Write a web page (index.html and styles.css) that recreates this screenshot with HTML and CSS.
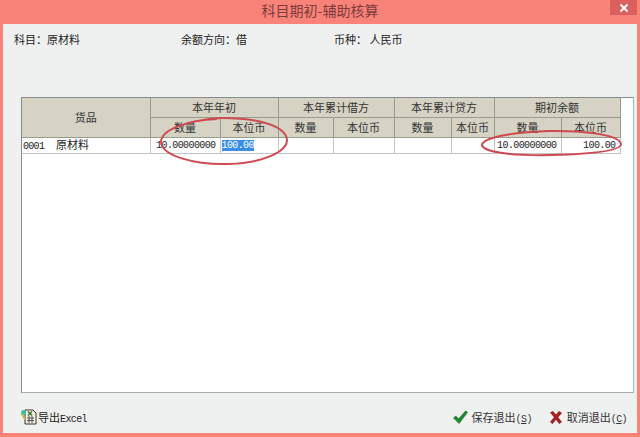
FILE: index.html
```html
<!DOCTYPE html>
<html lang="zh">
<head>
<meta charset="utf-8">
<title>科目期初-辅助核算</title>
<link rel="stylesheet" href="styles.css">
</head>
<body>
<div class="window">
  <header class="titlebar">
    <span class="title">科目期初-辅助核算</span>
    <span class="close">
      <svg width="10" height="10" viewBox="0 0 10 10"><path d="M1.500 1.500l7 7M8.500 1.500l-7 7" stroke="#fff" stroke-width="2" fill="none"/></svg>
    </span>
  </header>
  <main class="panel">
    <div class="info">
      <span class="info-a">科目：原材料</span>
      <span class="info-b">余额方向：借</span>
      <span class="info-c">币种：&nbsp;人民币</span>
    </div>
    <div class="gridbox">
      <table class="grid">
        <colgroup>
          <col class="c1"><col class="c2"><col class="c3"><col class="c4"><col class="c5"><col class="c6"><col class="c7"><col class="c8"><col class="c9">
        </colgroup>
        <thead>
          <tr class="h1">
            <th rowspan="2">货品</th>
            <th colspan="2">本年年初</th>
            <th colspan="2">本年累计借方</th>
            <th colspan="2">本年累计贷方</th>
            <th colspan="2">期初余额</th>
          </tr>
          <tr class="h2">
            <th>数量</th><th>本位币</th><th>数量</th><th>本位币</th><th>数量</th><th>本位币</th><th>数量</th><th>本位币</th>
          </tr>
        </thead>
        <tbody>
          <tr>
            <td class="goods"><span class="code">0001</span>原材料</td>
            <td class="num">10.00000000</td>
            <td class="edit"><span class="sel">100.00</span></td>
            <td></td><td></td><td></td><td></td>
            <td class="num">10.00000000</td>
            <td class="num">100.00</td>
          </tr>
        </tbody>
      </table>
    </div>
    <footer class="footer">
      <span class="btn">
        <svg width="17" height="18" viewBox="0 0 17 18">
          <path d="M5 2h8l3 3v11H5z" fill="#f4f2e4" stroke="#333" stroke-width="1"/>
          <path d="M7 10h7M7 12.500h7M9 8v7M12 8v7" stroke="#555" stroke-width="1"/>
          <path d="M8 3.500l4 4M12 3.500l-4 4" stroke="#3c7a2a" stroke-width="1.600"/>
          <circle cx="3.500" cy="4.500" r="2.500" fill="#3fbf9a"/>
          <path d="M1.500 6l3.500 5" stroke="#c9b84a" stroke-width="2"/>
        </svg>
        <span class="lbl">导出<span class="latin">Excel</span></span>
      </span>
      <span class="right">
        <span class="btn save">
          <svg width="15" height="14" viewBox="0 0 16 15"><path d="M0.500 8.500l2.500-2 3 3L13.500 1l2 1.500-9 12z" fill="#1f8a2e" stroke="#0f5c1c" stroke-width=".6"/></svg>
          <span class="lbl2">保存退出<span class="latin">(<u>S</u>)</span></span>
        </span>
        <span class="btn cancel">
          <svg width="14" height="14" viewBox="0 0 14 14"><path d="M1 2.500l3-1.500 3 3.500 3-3.500 3 2-3.800 4.300 3.800 4.700-2.800 2-3.200-4.300-3.500 4.300-2.500-2 4-4.700z" fill="#a3201f"/></svg>
          <span class="lbl2">取消退出<span class="latin">(<u>C</u>)</span></span>
        </span>
      </span>
    </footer>
  </main>
  <svg class="marks" width="640" height="437" viewBox="0 0 640 437">
    <path d="M217 119C187 120 161 130 161 142C162 156 195 165 229 164C262 163 287 152 287 140C286 127 262 118 222 118C214 118 206 119 198 121" />
    <path d="M550 131C510 132 483 138 482 145C483 152 512 156 552 155C592 154 621 151 621 144C620 136 590 130 545 131" />
  </svg>
</div>
</body>
</html>
```
FILE: styles.css
```css
* { box-sizing: border-box; }
html, body { margin: 0; height: 100%; }
body {
  font-family: "Noto Sans CJK SC", "Liberation Sans", sans-serif;
  font-size: 11px;
  color: #222;
  overflow: hidden;
}
.window {
  position: relative;
  width: 640px;
  height: 437px;
  background: #f98279;
  padding: 0 3px 4px;
  display: flex;
  flex-direction: column;
}
.titlebar {
  height: 24px;
  flex: none;
  position: relative;
  display: flex;
  align-items: center;
  justify-content: center;
  padding-bottom: 4px;
}
.title { font-size: 14px; color: #7c3c3c; }
.close {
  position: absolute;
  top: 0;
  right: 0;
  width: 27px;
  height: 15px;
  background: #d9605c;
  display: flex;
  align-items: center;
  justify-content: center;
}
.panel {
  flex: 1;
  background: #eff0f0;
  display: flex;
  flex-direction: column;
  min-height: 0;
}
.info {
  height: 73px;
  flex: none;
  padding: 7px 0 0 11px;
  display: flex;
  line-height: 16px;
}
.info-a { width: 167px; }
.info-b { width: 153px; }
.gridbox {
  width: 613px;
  height: 296px;
  flex: none;
  margin-left: 18px;
  background: #fff;
  border: 1px solid #8a8a8a;
  border-right-color: #b5b5b5;
  border-bottom-color: #a8a8a8;
}
.grid {
  table-layout: fixed;
  border-collapse: collapse;
  width: 598px;
}
.c1 { width: 128px; } .c2 { width: 70px; } .c3 { width: 58px; }
.c4 { width: 55px; } .c5 { width: 61px; } .c6 { width: 57px; }
.c7 { width: 43px; } .c8 { width: 67px; } .c9 { width: 59px; }
.grid th {
  background: #d6d2c4;
  font-weight: 400;
  padding: 0;
  border: 1px solid #9a9a90;
  border-top: 0;
  text-align: center;
  color: #333;
  line-height: 14px;
}
.grid th:first-child { border-left: 0; }
.h1 th { height: 19px; }
.h2 th { height: 20px; }
.grid td {
  height: 15px;
  padding: 0 1px;
  border: 1px solid #c4c4c4;
  border-top: 0;
  line-height: 13px;
  white-space: nowrap;
}
.grid td:first-child { border-left: 0; }
.grid .goods { padding-left: 1px; }
.code {
  display: inline-block;
  width: 33px;
  font-family: "Liberation Mono", monospace;
  font-size: 10px;
  letter-spacing: -.7px;
}
.grid .num {
  text-align: right;
  padding-right: 4px;
  font-family: "Liberation Mono", monospace;
  font-size: 10px;
  letter-spacing: -.6px;
}
.edit { font-family: "Liberation Mono", monospace; font-size: 10px; letter-spacing: -.6px; }
.sel { background: #3a8ee6; color: #fff; }
.footer {
  flex: 1;
  padding: 8px 10px 0 17px;
  display: flex;
  align-items: center;
  justify-content: space-between;
}
.btn { display: inline-flex; align-items: center; gap: 1px; }
.save, .cancel { gap: 4px; }
.right { display: inline-flex; gap: 17px; }
.lbl2 { color: #333; }
.latin { font-family: "Liberation Mono", monospace; font-size: 10px; letter-spacing: -.6px; }
.marks {
  position: absolute;
  top: 0;
  left: 0;
  pointer-events: none;
}
.marks path { fill: none; stroke: #cf4a50; stroke-width: 2; }
```
